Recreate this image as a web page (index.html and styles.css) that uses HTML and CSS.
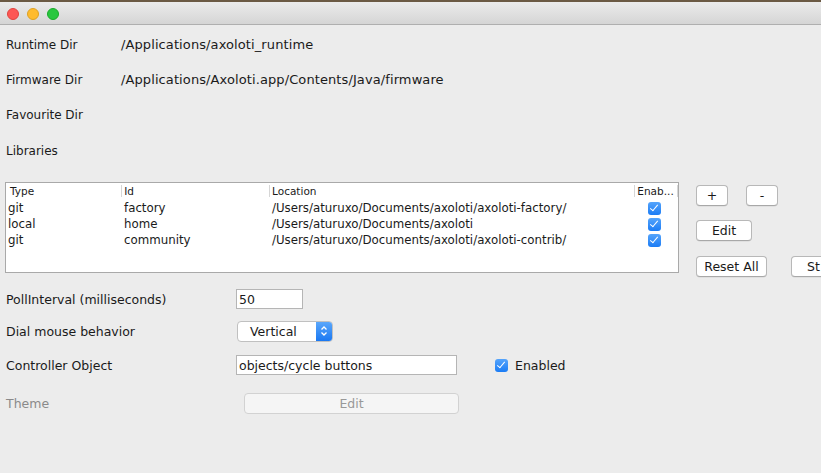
FILE: index.html
```html
<!DOCTYPE html>
<html>
<head>
<meta charset="utf-8">
<link rel="stylesheet" href="styles.css">
</head>
<body>
<div class="window">
  <div class="titlebar">
    <span class="light red"></span>
    <span class="light yellow"></span>
    <span class="light green"></span>
  </div>
  <div class="content">
    <div class="dirrow"><span class="dlabel">Runtime Dir</span><span class="dval">/Applications/axoloti_runtime</span></div>
    <div class="dirrow"><span class="dlabel">Firmware Dir</span><span class="dval">/Applications/Axoloti.app/Contents/Java/firmware</span></div>
    <div class="dirrow"><span class="dlabel">Favourite Dir</span><span class="dval"></span></div>
    <div class="dirrow libs"><span class="dlabel">Libraries</span></div>

    <div class="libarea">
      <div class="table">
        <div class="thead">
          <span class="c1">Type</span><span class="c2">Id</span><span class="c3">Location</span><span class="c4">Enab...</span>
        </div>
        <div class="tbody">
          <div class="trow"><span class="c1">git</span><span class="c2">factory</span><span class="c3">/Users/aturuxo/Documents/axoloti/axoloti-factory/</span><span class="c4"><span class="cb"></span></span></div>
          <div class="trow"><span class="c1">local</span><span class="c2">home</span><span class="c3">/Users/aturuxo/Documents/axoloti</span><span class="c4"><span class="cb"></span></span></div>
          <div class="trow"><span class="c1">git</span><span class="c2">community</span><span class="c3">/Users/aturuxo/Documents/axoloti/axoloti-contrib/</span><span class="c4"><span class="cb"></span></span></div>
        </div>
      </div>
      <div class="sidebtns">
        <div class="brow"><button class="btn small">+</button><button class="btn small">-</button></div>
        <div class="brow"><button class="btn edit">Edit</button></div>
        <div class="brow last"><button class="btn reset">Reset All</button><button class="btn st">St</button></div>
      </div>
    </div>

    <div class="form">
      <div class="frow poll"><span class="flabel">PollInterval (milliseconds)</span><span class="input short">50</span></div>
      <div class="frow dial"><span class="flabel">Dial mouse behavior</span>
        <span class="select"><span class="seltext">Vertical</span><span class="selarrow"><svg width="8" height="12" viewBox="0 0 8 12"><path d="M1.5 4.5 L4 2 L6.5 4.5 M1.5 7.5 L4 10 L6.5 7.5" fill="none" stroke="#fff" stroke-width="1.3"/></svg></span></span>
      </div>
      <div class="frow ctrl"><span class="flabel">Controller Object</span><span class="input long">objects/cycle buttons</span>
        <span class="chk"><span class="cb"></span><span>Enabled</span></span>
      </div>
      <div class="frow theme"><span class="flabel disabled">Theme</span><button class="btn themebtn">Edit</button></div>
    </div>
  </div>
</div>
</body>
</html>
```
FILE: styles.css
```css
html, body {
  margin: 0;
  padding: 0;
}
body {
  width: 821px;
  height: 473px;
  overflow: hidden;
  background: #ececec;
  font-family: "DejaVu Sans", "Liberation Sans", sans-serif;
  font-size: 12px;
  color: #1a1a1a;
}
.window {
  height: 473px;
  border-top: 2px solid #6b5a44;
  box-sizing: border-box;
}
.titlebar {
  height: 22px;
  background: linear-gradient(#ebebeb, #d5d5d5);
  border-bottom: 1px solid #afafaf;
  display: flex;
  align-items: center;
  gap: 8px;
  padding-left: 7px;
}
.light {
  width: 12px;
  height: 12px;
  border-radius: 50%;
  box-sizing: border-box;
  margin-top: 1px;
}
.red { background: #fd5754; border: 1px solid #e0443e; }
.yellow { background: #febb2e; border: 1px solid #dea123; }
.green { background: #29c73f; border: 1px solid #1aab29; }

.content {
  padding: 0 0 0 6px;
}
.dirrow {
  height: 35px;
  display: flex;
  align-items: center;
}
.dirrow:first-child {
  margin-top: 2px;
}
.dlabel {
  width: 115px;
}
.dval {
  font-size: 13px;
  letter-spacing: 0.1px;
}
.libs {
  height: 38px;
}
.libarea {
  display: flex;
  margin-top: 12px;
  margin-left: -1px;
}
.table {
  width: 672px;
  height: 89px;
  background: #fff;
  border: 1px solid #a9a9a9;
  font-size: 11.8px;
}
.thead, .trow {
  display: flex;
  height: 16px;
  align-items: center;
}
.thead {
  font-size: 10.5px;
  height: 14px;
  margin-top: 1px;
}
.tbody {
  margin-top: 2px;
}
.c1 { width: 113px; padding-left: 3px; }
.c2 { width: 146px; padding-left: 3px; }
.c3 { width: 365px; padding-left: 3px; }
.c4 { width: 42px; display: flex; justify-content: center; }
.thead .c1 { padding-left: 4px; width: 112px; }
.thead .c2, .thead .c3, .thead .c4 { border-left: 1px solid #d6d6d6; padding-left: 2px; }
.thead .c4 { border-right: 1px solid #d6d6d6; justify-content: flex-start; width: 40px; }
.trow .c1 { padding-left: 2px; width: 114px; }
.trow .c2 { padding-left: 2px; width: 146px; }
.trow .c3 { padding-left: 2px; width: 364px; }
.trow .c4 { margin-left: -3px; }
.cb {
  display: inline-block;
  width: 13px;
  height: 13px;
  border-radius: 3px;
  background: linear-gradient(#55a4fb, #1b7cf5);
  position: relative;
}
.cb::after {
  content: "";
  position: absolute;
  left: 4px;
  top: 1px;
  width: 3px;
  height: 7px;
  border: solid #fff;
  border-width: 0 1.6px 1.6px 0;
  transform: rotate(40deg);
}
.sidebtns {
  margin-left: 17px;
  margin-top: 3px;
  display: flex;
  flex-direction: column;
  gap: 14px;
}
.brow {
  display: flex;
  gap: 18px;
}
.brow.last { gap: 24px; margin-top: 1px; }
.btn {
  font-family: "DejaVu Sans", "Liberation Sans", sans-serif;
  font-size: 12.5px;
  color: #1a1a1a;
  background: #fff;
  border: 1px solid #b8b8b8;
  border-bottom-color: #a8a8a8;
  border-radius: 4px;
  height: 21px;
  padding: 0;
  box-shadow: 0 0.5px 0.5px rgba(0,0,0,0.1);
}
.small { width: 32px; }
.edit { width: 56px; }
.reset { width: 71px; }
.st { width: 60px; text-align: left; padding-left: 15px; }

.form {
  margin-top: 12px;
}
.frow {
  display: flex;
  align-items: center;
  height: 20px;
}
.flabel {
  width: 230px;
  font-size: 12.5px;
}
.poll { margin-bottom: 12px; }
.dial { margin-bottom: 14px; }
.ctrl { margin-bottom: 18px; }
.input {
  height: 20px;
  box-sizing: border-box;
  background: #fff;
  border: 1px solid #b5b5b5;
  font-size: 12.5px;
  padding-left: 2px;
  display: flex;
  align-items: center;
}
.short { width: 67px; }
.long { width: 221px; }
.select {
  margin-left: 1px;
  width: 96px;
  height: 21px;
  box-sizing: border-box;
  border: 1px solid #c0c0c0;
  border-radius: 4px;
  background: #fff;
  display: flex;
  overflow: hidden;
  font-size: 12.5px;
}
.seltext {
  flex: 1;
  padding-left: 12px;
  display: flex;
  align-items: center;
}
.selarrow {
  width: 16px;
  background: linear-gradient(#5aa7fb, #1a78f2);
  display: flex;
  align-items: center;
  justify-content: center;
}
.chk {
  margin-left: 38px;
  display: flex;
  align-items: center;
  gap: 7px;
  font-size: 12.5px;
}
.disabled { color: #8a8a8a; }
.themebtn {
  margin-left: 8px;
  width: 215px;
  height: 21px;
  background: #f5f5f5;
  color: #999;
  border-color: #d2d2d2;
  box-shadow: none;
}
```
